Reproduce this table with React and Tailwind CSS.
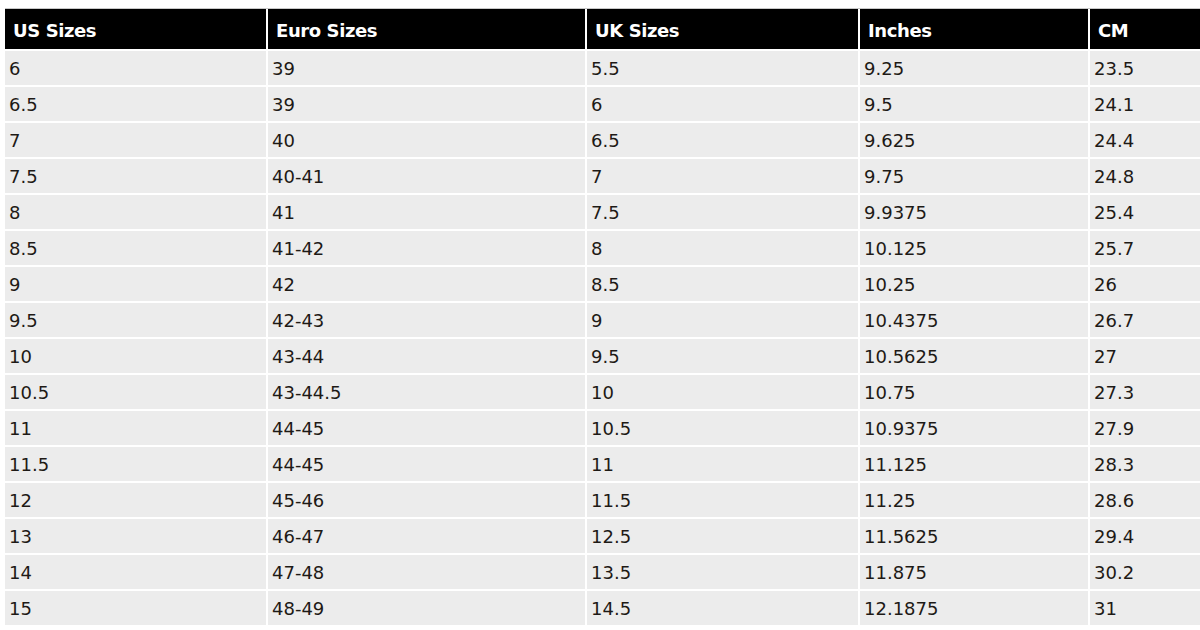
import React from 'react';

const rows = [
  ['6', '39', '5.5', '9.25', '23.5'],
  ['6.5', '39', '6', '9.5', '24.1'],
  ['7', '40', '6.5', '9.625', '24.4'],
  ['7.5', '40-41', '7', '9.75', '24.8'],
  ['8', '41', '7.5', '9.9375', '25.4'],
  ['8.5', '41-42', '8', '10.125', '25.7'],
  ['9', '42', '8.5', '10.25', '26'],
  ['9.5', '42-43', '9', '10.4375', '26.7'],
  ['10', '43-44', '9.5', '10.5625', '27'],
  ['10.5', '43-44.5', '10', '10.75', '27.3'],
  ['11', '44-45', '10.5', '10.9375', '27.9'],
  ['11.5', '44-45', '11', '11.125', '28.3'],
  ['12', '45-46', '11.5', '11.25', '28.6'],
  ['13', '46-47', '12.5', '11.5625', '29.4'],
  ['14', '47-48', '13.5', '11.875', '30.2'],
  ['15', '48-49', '14.5', '12.1875', '31'],
];

const headers = ['US Sizes', 'Euro Sizes', 'UK Sizes', 'Inches', 'CM'];

export default function App() {
  return (
    <div className="w-[1200px] h-[630px] overflow-hidden bg-white pl-[5px] pt-[8px] font-['DejaVu_Sans',sans-serif]">
      <div className="border-t border-[#c8c8c8] w-[1200px]">
        <div className="grid grid-cols-[261px_317px_271px_228px_200px] gap-[2px]">
          {headers.map((h) => (
            <div key={h} className="h-[40px] bg-black text-white font-bold text-[18px] tracking-[-0.4px] flex items-center px-[8px] pt-[3px]">
              {h}
            </div>
          ))}
          {rows.map((r, i) =>
            r.map((c, j) => (
              <div key={i + '-' + j} className="h-[34px] bg-[#ececec] text-[#1e1a16] text-[18px] flex items-center px-[4px]">
                {c}
              </div>
            ))
          )}
        </div>
      </div>
    </div>
  );
}
